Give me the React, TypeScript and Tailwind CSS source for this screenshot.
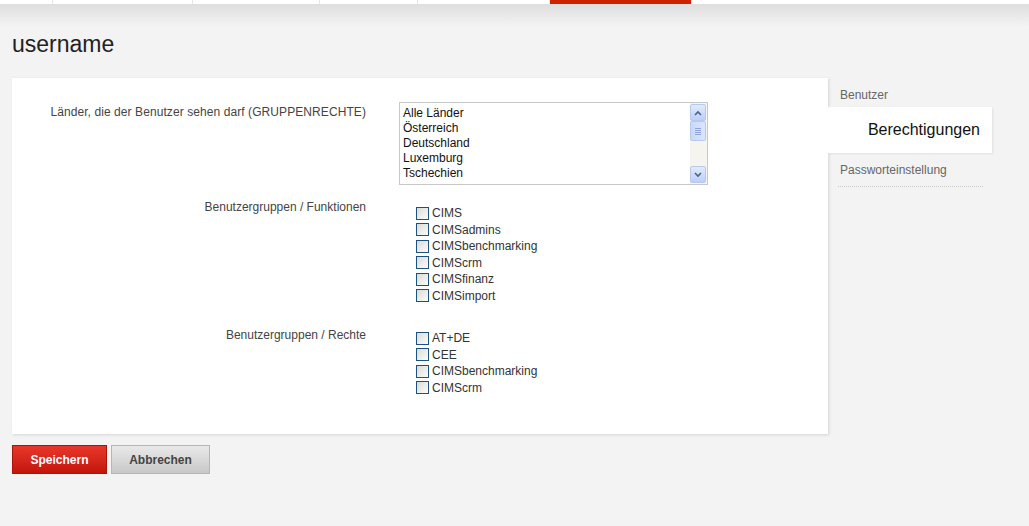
import React from "react";

const countries = ["Alle Länder", "Österreich", "Deutschland", "Luxemburg", "Tschechien"];
const funktionen = ["CIMS", "CIMSadmins", "CIMSbenchmarking", "CIMScrm", "CIMSfinanz", "CIMSimport"];
const rechte = ["AT+DE", "CEE", "CIMSbenchmarking", "CIMScrm"];

const topTabs = [
	{ w: "w-[53px]", active: false },
	{ w: "w-[140px]", active: false },
	{ w: "w-[127px]", active: false },
	{ w: "w-[98px]", active: false },
	{ w: "w-[132px]", active: false },
	{ w: "w-[142px]", active: true },
];

function Checkbox({ label }: { label: string }) {
	return (
		<label className="flex h-[16.5px] items-center gap-[3px] text-[12px] text-[#333]">
			<span className="h-[13px] w-[13px] border border-[#1c5180] bg-gradient-to-br from-[#dcdcd6] to-[#fbfbf9]" />
			<span>{label}</span>
		</label>
	);
}

function ScrollBtn({ up }: { up: boolean }) {
	return (
		<div className="flex h-[17px] w-[16px] items-center justify-center rounded-[2px] border border-[#b6c9ef] bg-gradient-to-b from-[#e1eafd] to-[#bccffb]">
			<svg width="8" height="6" viewBox="0 0 8 6">
				<path d={up ? "M1 5 L4 2 L7 5" : "M1 1 L4 4 L7 1"} fill="none" stroke="#4d6185" strokeWidth="1.6" />
			</svg>
		</div>
	);
}

function FakeSelect() {
	return (
		<div className="flex h-[83px] w-[309px] border border-[#c8c8c8] bg-white">
			<div className="flex-1 pl-[3px] pt-[3px] text-[12px] leading-[15px] text-[#111]">
				{countries.map((c) => (
					<div key={c}>{c}</div>
				))}
			</div>
			<div className="flex w-[17px] flex-col bg-[#f5f4ee] py-[1px]">
				<ScrollBtn up />
				<div className="flex h-[20px] w-[16px] items-center justify-center rounded-[2px] border border-[#b6c9ef] bg-gradient-to-r from-[#c9d8fc] to-[#dbe5fd]">
					<div className="flex flex-col gap-[1px]">
						<span className="h-[1px] w-[6px] bg-[#8ea5d9]" />
						<span className="h-[1px] w-[6px] bg-[#8ea5d9]" />
						<span className="h-[1px] w-[6px] bg-[#8ea5d9]" />
						<span className="h-[1px] w-[6px] bg-[#8ea5d9]" />
					</div>
				</div>
				<div className="flex-1" />
				<ScrollBtn up={false} />
			</div>
		</div>
	);
}

export default function App() {
	return (
		<main className="min-h-[526px] w-full bg-[#f3f3f3] font-['Liberation_Sans',Arial,sans-serif]">
			<div className="flex h-[4px] bg-white">
				{topTabs.map((t, i) => (
					<div key={i} className={`${t.w} h-full border-r border-[#e6e6e6] ${t.active ? "bg-[#cc2200]" : ""}`} />
				))}
			</div>
			<div className="h-[22px] bg-gradient-to-b from-[#dedede] to-[#f3f3f3]" />

			<div className="px-[12px]">
				<h1 className="mt-[5px] text-[23px] leading-[26px] text-[#222]">username</h1>

				<div className="mt-[21px] flex items-start">
					<div className="h-[356px] w-[816px] bg-white pt-[24px] shadow-[1px_1px_3px_rgba(0,0,0,0.12)]">
						<div className="flex">
							<div className="w-[354px] pt-[1px] text-right text-[12px] tracking-[0.08px] text-[#444]">
								Länder, die der Benutzer sehen darf (GRUPPENRECHTE)
							</div>
							<div className="ml-[33px]">
								<FakeSelect />
							</div>
						</div>

						<div className="mt-[13px] flex">
							<div className="w-[354px] text-right text-[12px] text-[#444]">Benutzergruppen / Funktionen</div>
							<div className="ml-[50px] pt-[7px]">
								{funktionen.map((f) => (
									<Checkbox key={f} label={f} />
								))}
							</div>
						</div>

						<div className="mt-[22px] flex">
							<div className="w-[354px] text-right text-[12px] text-[#444]">Benutzergruppen / Rechte</div>
							<div className="ml-[50px] pt-[4px]">
								{rechte.map((f) => (
									<Checkbox key={f} label={f} />
								))}
							</div>
						</div>
					</div>

					<nav className="w-[164px] pt-[8px] text-[12px]">
						<div className="pl-[12px] text-[#666]">Benutzer</div>
						<div className="mt-[3px] flex h-[46px] items-center justify-end bg-white pr-[12px] text-[16px] text-[#111] shadow-[1px_1px_2px_rgba(0,0,0,0.08)]">
							Berechtigungen
						</div>
						<div className="ml-[10px] mr-[9px] mt-[8px] border-b border-dotted border-[#c8c8c8] pb-[7px] pl-[2px] text-[#666]">
							Passworteinstellung
						</div>
					</nav>
				</div>

				<div className="mt-[11px] flex gap-[4px]">
					<button className="h-[29px] w-[95px] border border-[#a8150a] bg-gradient-to-b from-[#e8372a] to-[#c31408] text-[12px] font-bold text-white">
						Speichern
					</button>
					<button className="h-[29px] w-[99px] border border-[#b5b5b5] bg-gradient-to-b from-[#e9e9e9] to-[#c8c8c8] text-[12px] font-bold text-[#444]">
						Abbrechen
					</button>
				</div>
			</div>
		</main>
	);
}
